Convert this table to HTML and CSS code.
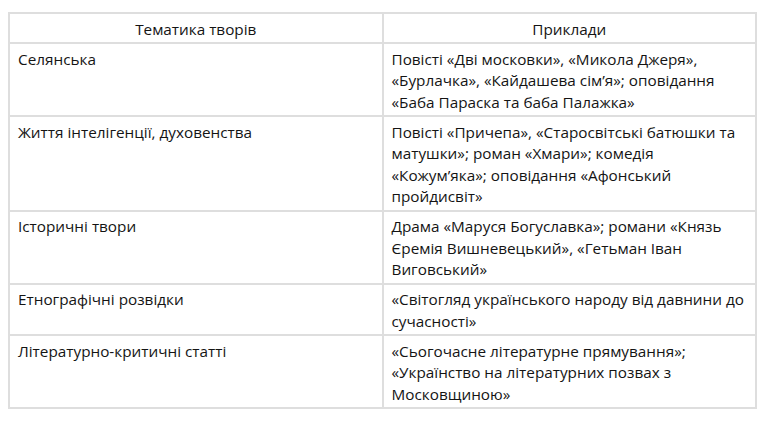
FILE: index.html
```html
<!DOCTYPE html>
<html lang="uk">
<head>
<meta charset="utf-8">
<title>Тематика творів</title>
<link rel="stylesheet" href="styles.css">
</head>
<body>
<table class="works">
  <thead>
    <tr><th>Тематика творів</th><th>Приклади</th></tr>
  </thead>
  <tbody>
    <tr><td>Селянська</td><td>Повісті «Дві московки», «Микола Джеря», «Бурлачка», «Кайдашева сім’я»; оповідання «Баба Параска та баба Палажка»</td></tr>
    <tr><td>Життя інтелігенції, духовенства</td><td>Повісті «Причепа», «Старосвітські батюшки та матушки»; роман «Хмари»; комедія «Кожум’яка»; оповідання «Афонський пройдисвіт»</td></tr>
    <tr><td>Історичні твори</td><td>Драма «Маруся Богуславка»; романи «Князь Єремія Вишневецький», «Гетьман Іван Виговський»</td></tr>
    <tr><td>Етнографічні розвідки</td><td>«Світогляд українського народу від давнини до сучасності»</td></tr>
    <tr><td>Літературно-критичні статті</td><td>«Сьогочасне літературне прямування»; «Українство на літературних позвах з Московщиною»</td></tr>
  </tbody>
</table>
</body>
</html>
```
FILE: styles.css
```css
html, body {
  margin: 0;
  background: #ffffff;
}
body {
  padding: 12px 12px 0 8px;
  font-family: "Open Sans", "Noto Sans", sans-serif;
  font-size: 15.3px;
  line-height: 21.5px;
  color: #141414;
}
.works {
  width: 749px;
  border-collapse: collapse;
  table-layout: fixed;
}
.works th,
.works td {
  border: 2px solid #dedede;
  padding: 4.5px 8px 2px 8px;
  vertical-align: top;
  text-align: left;
  font-weight: normal;
}
.works th {
  text-align: center;
}
```
